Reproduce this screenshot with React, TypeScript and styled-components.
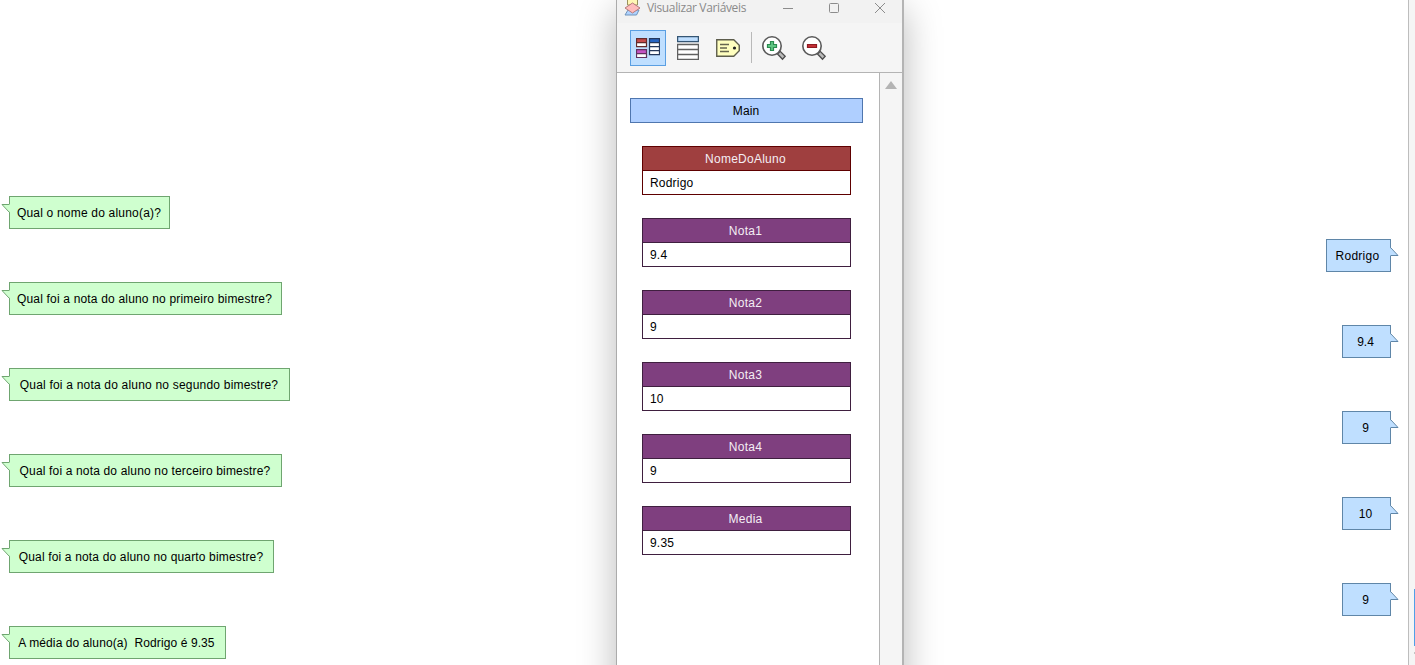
import React from "react";
import styled, { createGlobalStyle } from "styled-components";

const GlobalStyle = createGlobalStyle`
  * { box-sizing: border-box; }
  body { margin: 0; background: #fff; overflow: hidden; }
`;

const Page = styled.div`
  position: relative;
  display: flex;
  height: 665px;
  overflow: hidden;
  background: #fff;
  font: 12px/14px "Liberation Sans", Arial, sans-serif;
  color: #000;
`;

const Console = styled.main`
  flex: 1;
  display: flex;
  flex-direction: column;
  gap: 10px;
  padding: 196px 17px 0 9px;
`;

const Bubble = styled.div<{ $reply?: boolean; $width: number; $spacing: number; $inset: number }>`
  position: relative;
  flex: none;
  align-self: ${(p) => (p.$reply ? "flex-end" : "flex-start")};
  display: flex;
  align-items: center;
  justify-content: center;
  width: ${(p) => p.$width}px;
  height: 33px;
  padding: 1px ${(p) => p.$inset}px 0 0;
  border: 1px solid ${(p) => (p.$reply ? "#5f86a8" : "#6fa570")};
  background: ${(p) => (p.$reply ? "#bfdfff" : "#cfffcf")};
  letter-spacing: ${(p) => p.$spacing}px;
  white-space: pre;
`;

const Tail = styled.svg<{ $reply?: boolean }>`
  position: absolute;
  top: 7px;
  ${(p) => (p.$reply ? "right: -9px;" : "left: -9px;")}
`;

const EdgeBar = styled.aside`
  display: flex;
  flex-direction: column;
  justify-content: flex-end;
  align-items: flex-end;
  gap: 6px;
  width: 7px;
  padding-bottom: 11px;
  border-left: 1px solid #bdbdbd;
  background: #f5f5f5;
`;

const EdgeThumb = styled.div`
  width: 1px;
  height: 57px;
  background: #4f9fe8;
`;

const EdgeArrow = styled.div`
  width: 1px;
  height: 2px;
  background: #c4c4c4;
`;

const Window = styled.section`
  position: absolute;
  left: 616px;
  top: -8px;
  width: 288px;
  height: 720px;
  display: flex;
  flex-direction: column;
  border: 1px solid #ababab;
  border-right: 2px solid #b4b4b4;
  background: #f5f5f5;
  box-shadow: 0 18px 35px rgba(0, 0, 0, 0.28);
`;

const TitleBar = styled.header`
  display: flex;
  align-items: center;
  height: 30px;
  padding: 0 0 0 7px;
  background: #f2f2f2;
`;

const Title = styled.h1`
  flex: 1;
  margin: 0 0 0 6px;
  font: 400 12px/16px "Open Sans", sans-serif;
  letter-spacing: -0.36px;
  white-space: nowrap;
  color: #8a8a8a;
`;

const Controls = styled.div`
  display: flex;
  margin-right: -1px;
`;

const Caption = styled.div`
  display: flex;
  align-items: center;
  justify-content: center;
  width: 46px;
`;

const Toolbar = styled.nav`
  display: flex;
  align-items: center;
  gap: 4px;
  height: 50px;
  padding: 0 13px;
  border-bottom: 1px solid #b4b4b4;
`;

const Tool = styled.div<{ $active?: boolean }>`
  display: flex;
  align-items: center;
  justify-content: center;
  width: 36px;
  height: 36px;
  border: 1px solid ${(p) => (p.$active ? "#5a9fe2" : "transparent")};
  background: ${(p) => (p.$active ? "#bfdfff" : "transparent")};
`;

const Divider = styled.div`
  width: 1px;
  height: 31px;
  margin-left: 1px;
  background: #b9b9b9;
`;

const Body = styled.div`
  flex: 1;
  display: flex;
`;

const Canvas = styled.div`
  flex: 1;
  padding: 25px 16px 0 13px;
  background: #fff;
`;

const Scope = styled.h2`
  margin: 0 0 23px;
  height: 25px;
  padding-right: 1px;
  border: 1px solid #4f76ae;
  background: #afcfff;
  font: inherit;
  line-height: 25px;
  letter-spacing: 0.1px;
  text-align: center;
`;

const Card = styled.article<{ $edge: string }>`
  margin: 0 12px 23px;
  height: 49px;
  border: 1px solid ${(p) => p.$edge};
`;

const CardName = styled.div<{ $edge: string; $fill: string }>`
  height: 24px;
  padding-right: 2px;
  border-bottom: 1px solid ${(p) => p.$edge};
  background: ${(p) => p.$fill};
  color: #f4eef4;
  line-height: 25px;
  letter-spacing: 0.25px;
  text-align: center;
`;

const CardValue = styled.div`
  padding-left: 7px;
  line-height: 25px;
  letter-spacing: 0.2px;
`;

const ScrollTrack = styled.div`
  display: flex;
  justify-content: center;
  width: 23px;
  padding-top: 8px;
  border-left: 1px solid #b4b4b4;
  background: #f5f5f5;
`;

type Message = { text: string; width: number; spacing: number; inset: number; reply?: boolean };

const messages: Message[] = [
  { text: "Qual o nome do aluno(a)?", width: 161, spacing: 0.2, inset: 1 },
  { text: "Rodrigo", width: 65, spacing: 0.25, inset: 2, reply: true },
  { text: "Qual foi a nota do aluno no primeiro bimestre?", width: 273, spacing: 0.18, inset: 2 },
  { text: "9.4", width: 49, spacing: 0, inset: 2, reply: true },
  { text: "Qual foi a nota do aluno no segundo bimestre?", width: 281, spacing: 0.2, inset: 1 },
  { text: "9", width: 49, spacing: 0, inset: 2, reply: true },
  { text: "Qual foi a nota do aluno no terceiro bimestre?", width: 273, spacing: 0.16, inset: 1 },
  { text: "10", width: 49, spacing: 0, inset: 2, reply: true },
  { text: "Qual foi a nota do aluno no quarto bimestre?", width: 265, spacing: 0.16, inset: 1 },
  { text: "9", width: 49, spacing: 0, inset: 2, reply: true },
  { text: "A média do aluno(a)  Rodrigo é 9.35", width: 217, spacing: 0.1, inset: 2 },
];

const RED = { edge: "#5f0000", fill: "#9f3f3f" };
const PURPLE = { edge: "#3f1f3f", fill: "#7f3f7f" };

const variables = [
  { name: "NomeDoAluno", value: "Rodrigo", tone: RED },
  { name: "Nota1", value: "9.4", tone: PURPLE },
  { name: "Nota2", value: "9", tone: PURPLE },
  { name: "Nota3", value: "10", tone: PURPLE },
  { name: "Nota4", value: "9", tone: PURPLE },
  { name: "Media", value: "9.35", tone: PURPLE },
];

function BubbleTail({ reply }: { reply?: boolean }) {
  return reply ? (
    <Tail $reply width="9" height="10">
      <path d="M0 .5 8 8.5H0Z" fill="#bfdfff" />
      <path d="M.5 .5 8 8.5H1" fill="none" stroke="#5f86a8" />
    </Tail>
  ) : (
    <Tail width="9" height="10">
      <path d="M9 .5H1L9 8.5Z" fill="#cfffcf" />
      <path d="M8 .5H1L8.5 8.5" fill="none" stroke="#6fa570" />
    </Tail>
  );
}

function AppIcon() {
  return (
    <svg width="17" height="16" viewBox="0 0 17 16">
      <path d="M4 10h11l-2.500 5H1z" fill="#afd3ff" stroke="#6f93bb" />
      <path d="M3.500 -1h10v6h-10z" fill="#fff7b5" stroke="#99915c" />
      <path d="M8.500 3 16 8l-7.500 5L1 8z" fill="#ffbcbc" stroke="#b57a7a" />
    </svg>
  );
}

function MagnifierIcon({ plus }: { plus?: boolean }) {
  return (
    <svg width="26" height="26" viewBox="0 0 26 26">
      <path d="m16.500 19 2.700-2.700 5 5-2.700 2.900z" fill="#b9b9b9" stroke="#4d4d4d" strokeWidth="1.300" />
      <circle cx="11" cy="11" r="9.200" fill="#fff" stroke="#5a5a5a" strokeWidth="1.600" />
      {plus ? (
        <path d="M9.500 6.500h3v3h3v3h-3v3h-3v-3h-3v-3h3z" fill="#5fc783" stroke="#2c8c50" strokeWidth="1.200" />
      ) : (
        <path d="M6.500 9.500h9v3h-9z" fill="#c22f35" stroke="#8f1c22" strokeWidth="1.200" />
      )}
    </svg>
  );
}

export default function App() {
  return (
    <Page>
      <GlobalStyle />
      <Console>
        {messages.map((m, i) => (
          <Bubble key={i} $reply={m.reply} $width={m.width} $spacing={m.spacing} $inset={m.inset}>
            <BubbleTail reply={m.reply} />
            {m.text}
          </Bubble>
        ))}
      </Console>
      <EdgeBar>
        <EdgeThumb />
        <EdgeArrow />
      </EdgeBar>
      <Window>
        <TitleBar>
          <AppIcon />
          <Title>Visualizar Variáveis</Title>
          <Controls>
            <Caption>
              <svg width="10" height="10"><path d="M0 5.500h10" stroke="#8c8c8c" /></svg>
            </Caption>
            <Caption>
              <svg width="10" height="10"><rect x=".5" y=".5" width="9" height="9" rx="1" fill="none" stroke="#8c8c8c" /></svg>
            </Caption>
            <Caption>
              <svg width="10" height="10"><path d="m0 0 10 10M10 0 0 10" stroke="#8c8c8c" /></svg>
            </Caption>
          </Controls>
        </TitleBar>
        <Toolbar>
          <Tool $active>
            <svg width="24" height="20" viewBox="0 0 24 20">
              <path d="M.5 .5h10v8H.5zM.5 11.500h10v8H.5zM13.500 .5h10v16h-10z" fill="#fff" />
              <path d="M.5 .5h10v4H.5z" fill="#c74d4d" />
              <path d="M.5 11.500h10v4H.5z" fill="#c455c4" />
              <path d="M13.500 .5h10v4h-10z" fill="#2766c4" />
              <path d="M.5 .5h10v8H.5zM.5 4.500h10" fill="none" stroke="#642c2c" strokeWidth="1.250" />
              <path d="M.5 11.500h10v8H.5zM.5 15.500h10" fill="none" stroke="#60335f" strokeWidth="1.250" />
              <path d="M13.500 .5h10v16h-10zM13.500 4.500h10M13.500 8.500h10M13.500 12.500h10" fill="none" stroke="#25395c" strokeWidth="1.250" />
            </svg>
          </Tool>
          <Tool>
            <svg width="22" height="24" viewBox="0 0 22 24">
              <rect x=".6" y=".6" width="20.800" height="5" fill="#bfdfff" stroke="#355674" strokeWidth="1.300" />
              <path d="M.6 8.500h20.800v15H.6zM.6 13.500h20.800M.6 18.500h20.800" fill="#fff" stroke="#606060" strokeWidth="1.300" />
            </svg>
          </Tool>
          <Tool>
            <svg width="24" height="18" viewBox="0 0 24 18">
              <path d="M.75 .75h17l5.500 5.500v5.500l-5.500 5.500h-17z" fill="#ffffbf" stroke="#5d5d4c" strokeWidth="1.400" />
              <path d="M4 5.500h9M4 9h7M4 12.500h9" stroke="#66664f" strokeWidth="1.300" />
              <circle cx="18.500" cy="9" r="1.600" fill="#222" />
            </svg>
          </Tool>
          <Divider />
          <Tool><MagnifierIcon plus /></Tool>
          <Tool><MagnifierIcon /></Tool>
        </Toolbar>
        <Body>
          <Canvas>
            <Scope>Main</Scope>
            {variables.map((v) => (
              <Card key={v.name} $edge={v.tone.edge}>
                <CardName $edge={v.tone.edge} $fill={v.tone.fill}>{v.name}</CardName>
                <CardValue>{v.value}</CardValue>
              </Card>
            ))}
          </Canvas>
          <ScrollTrack>
            <svg width="12" height="8"><path d="M0 8 6 0l6 8z" fill="#b4b4b4" /></svg>
          </ScrollTrack>
        </Body>
      </Window>
    </Page>
  );
}
